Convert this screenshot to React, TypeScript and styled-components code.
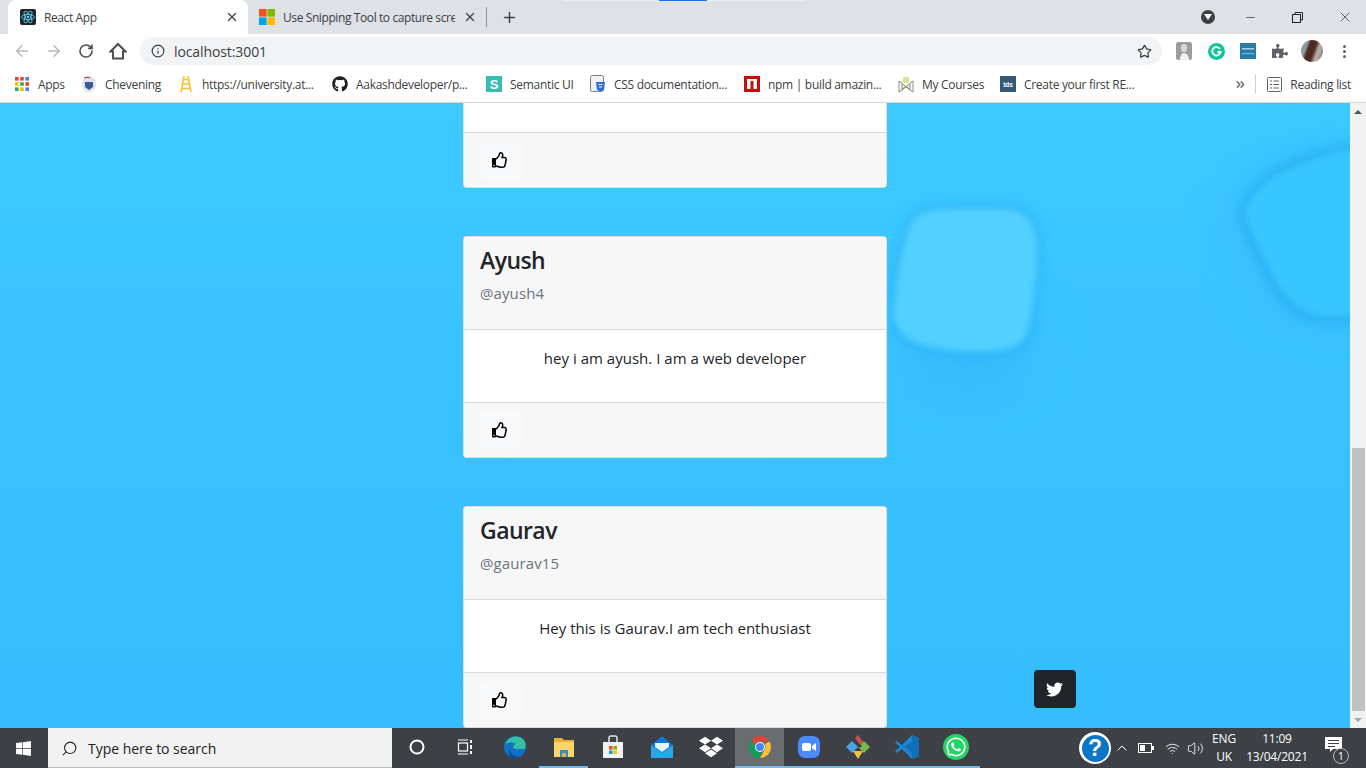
import React from "react";
import styled, { createGlobalStyle } from "styled-components";
import { FaGithub, FaRegThumbsUp, FaTwitter, FaWhatsapp, FaDropbox, FaWindows, FaPuzzlePiece } from "react-icons/fa";
import { ArrowLeft, ArrowRight, RotateCw, Info, Star, X, Plus, Minus, Search, ChevronUp, Wifi, Volume2, ChevronsRight } from "lucide-react";

const Global = createGlobalStyle`
  html, body { margin: 0; padding: 0; height: 768px; overflow: hidden; }
  * { box-sizing: border-box; }
  body { font-family: "Open Sans", "Noto Sans", "Liberation Sans", sans-serif; }
`;
const Screen = styled.div`width:1366px;height:768px;display:flex;flex-direction:column;position:relative;overflow:hidden;`;

/* Tab strip */
const TabStrip = styled.div`height:34px;background:#dee1e6;display:flex;align-items:flex-end;padding-left:8px;position:relative;flex-shrink:0;`;
const LoadLine = styled.div<{ $l: number; $w: number; $c: string }>`position:absolute;top:0;left:${p => p.$l}px;width:${p => p.$w}px;height:1px;background:${p => p.$c};`;
const Tab = styled.div<{ $active?: boolean; $w: number; $pl: number }>`
  width:${p => p.$w}px;height:${p => p.$active ? 34 : 32}px;display:flex;align-items:center;padding:${p => p.$active ? 0 : 0}px 9px 0 ${p => p.$pl}px;
  background:${p => p.$active ? "#fff" : "transparent"};border-radius:8px 8px 0 0;font-size:12px;color:#3c4043;gap:8px;
  align-self:flex-end;margin-bottom:${p => p.$active ? 0 : 1}px;
`;
const TabLabel = styled.span`flex:1;white-space:nowrap;overflow:hidden;letter-spacing:-.4px;`;
const TabSep = styled.div`width:1px;height:20px;background:#8e9196;margin:0 0 7px 0;`;
const NewTab = styled.div`width:44px;height:34px;display:flex;align-items:center;justify-content:center;color:#3c4043;`;
const WinControls = styled.div`margin-left:auto;margin-right:-2px;display:flex;align-items:center;height:34px;color:#222;`;
const WinBtn = styled.div`width:47px;height:32px;display:flex;align-items:center;justify-content:center;`;
const DownBadge = styled.div`width:14px;height:14px;border-radius:50%;background:#3c4043;margin-right:12px;display:flex;align-items:center;justify-content:center;`;

/* Toolbar */
const Toolbar = styled.div`height:34px;background:#fff;display:flex;align-items:center;flex-shrink:0;padding-left:6px;`;
const NavBtn = styled.div<{ $dim?: boolean }>`width:32px;height:28px;display:flex;align-items:center;justify-content:center;color:${p => p.$dim ? "#b6b8bb" : "#4b4e52"};`;
const Omnibox = styled.div`width:1022px;height:28px;margin-left:6px;border-radius:14px;background:#f1f3f4;display:flex;align-items:center;padding:0 10px 0 11px;font-size:14px;color:#3c4043;gap:9px;`;
const OmniText = styled.span`flex:1;letter-spacing:-.1px;`;
const ExtArea = styled.div`display:flex;margin-left:6px;`;
const ExtSlot = styled.div`width:32px;height:28px;display:flex;align-items:center;justify-content:center;color:#5f6368;`;
const Avatar = styled.div`width:22px;height:22px;border-radius:50%;background:linear-gradient(110deg,#8e9aa0 0 25%,#4d2a22 35% 55%,#b9b2aa 70%,#77746f 100%);`;
const MenuDots = styled.div`display:flex;flex-direction:column;gap:2px;`;
const MenuDot = styled.span`width:3px;height:3px;border-radius:50%;background:#5f6368;`;

/* Bookmarks */
const Bookmarks = styled.div`height:35px;background:#fff;border-bottom:1px solid #d4d6d9;display:flex;align-items:center;padding:0 0 2px 14px;flex-shrink:0;font-size:12px;color:#3c4043;`;
const Mark = styled.div<{ $w: number }>`width:${p => p.$w}px;display:flex;align-items:center;gap:8px;white-space:nowrap;flex-shrink:0;`;
const MarkLabel = styled.span`letter-spacing:-.3px;`;
const MarkEnd = styled.div`margin-left:auto;display:flex;align-items:center;padding-right:15px;color:#5f6368;`;
const MarkSep = styled.div`width:1px;height:20px;background:#d0d2d5;margin:0 11px 0 8px;`;
const ReadingLabel = styled.span`margin-left:8px;color:#3c4043;letter-spacing:-.3px;`;

/* Page */
const Viewport = styled.div`flex:1;min-height:0;display:flex;`;
const Page = styled.main`
  flex:1;position:relative;overflow:hidden;background:linear-gradient(180deg,#3dcaff 0%,#38c1ff 55%,#35bdff 100%);
  display:flex;flex-direction:column;align-items:center;gap:48px;
`;
const Backdrop = styled.svg`position:absolute;left:0;top:0;`;
const Card = styled.section`position:relative;width:424px;background:#fff;border:1px solid rgba(0,0,0,.125);border-radius:4px;flex-shrink:0;display:flex;flex-direction:column;`;
const ClippedCard = styled(Card)`border-top:none;border-radius:0 0 4px 4px;`;
const CardHeader = styled.header`height:93px;background:#f7f7f7;border-bottom:1px solid #d9d9d9;padding:7px 16px 0;border-radius:3px 3px 0 0;`;
const Name = styled.h5`margin:0;font-size:23px;line-height:32px;font-weight:600;color:#212529;letter-spacing:-.55px;`;
const Handle = styled.h6`margin:5px 0 0;font-size:15px;line-height:24px;font-weight:400;color:#6c757d;letter-spacing:.1px;`;
const CardBody = styled.div<{ $h?: number }>`height:${p => p.$h ?? 72}px;padding-top:16px;text-align:center;font-size:15px;line-height:24px;color:#212529;letter-spacing:.02px;`;
const CardFooter = styled.footer`height:55px;background:#f7f7f7;border-top:1px solid #d9d9d9;padding:9px 16px 0;border-radius:0 0 3px 3px;`;
const LikeBtn = styled.button`width:42px;height:37px;border:none;border-radius:4px;background:#f8f9fa;display:flex;align-items:center;justify-content:center;color:#000;padding:0 2px 1px 0;`;
const TweetBtn = styled.button`position:absolute;left:1034px;top:567px;width:42px;height:38px;border:none;border-radius:4px;background:#212529;color:#fff;display:flex;align-items:center;justify-content:center;padding:0 2px 0 0;`;

const Scrollbar = styled.div`width:16px;background:#f1f1f1;display:flex;flex-direction:column;align-items:center;flex-shrink:0;`;
const Arrow = styled.div<{ $down?: boolean; $c: string }>`
  height:17px;flex-shrink:0;width:100%;display:flex;align-items:center;justify-content:center;
  &::before{content:"";border-left:4px solid transparent;border-right:4px solid transparent;
  ${p => p.$down ? `border-top:4px solid ${p.$c};` : `border-bottom:4px solid ${p.$c};`}}
`;
const ScrollSpace = styled.div`height:328px;flex-shrink:0;`;
const Thumb = styled.div`flex:1;width:13px;background:#c1c1c1;`;

/* Taskbar */
const Taskbar = styled.div`height:40px;background:#3d4045;display:flex;align-items:stretch;flex-shrink:0;color:#fff;`;
const StartBtn = styled.div`width:48px;display:flex;align-items:center;justify-content:center;padding-right:2px;`;
const SearchBox = styled.div`width:344px;background:#f2f2f2;display:flex;align-items:center;padding:1px 0 0 13px;gap:10px;color:#222;font-size:14px;border-bottom:1px solid #bbb;`;
const SearchText = styled.span`letter-spacing:-.03px;`;
const TaskSlot = styled.div<{ $open?: boolean; $active?: boolean; $w?: number }>`
  width:${p => p.$w ?? 49}px;display:flex;align-items:center;justify-content:center;position:relative;
  background:${p => p.$active ? "#6a6d70" : "transparent"};
  border-bottom:2px solid ${p => p.$open ? "#76b9ed" : "transparent"};
`;
const Tray = styled.div`margin-left:auto;display:flex;align-items:center;padding-right:11px;`;
const HelpCircle = styled.div`width:32px;height:32px;border-radius:50%;background:#fff;display:flex;align-items:center;justify-content:center;`;
const HelpInner = styled.div`width:27px;height:27px;border-radius:50%;background:#0a76c4;color:#fff;font:bold 23px "Liberation Sans",sans-serif;display:flex;align-items:center;justify-content:center;`;
const TraySlot = styled.div<{ $w: number }>`width:${p => p.$w}px;display:flex;align-items:center;justify-content:center;`;
const TrayText = styled.div<{ $w: number }>`width:${p => p.$w}px;text-align:center;font-size:12px;line-height:18px;letter-spacing:-.2px;color:#fff;`;
const Notif = styled.div`width:44px;height:40px;position:relative;display:flex;align-items:center;justify-content:center;`;
const NotifCount = styled.div`position:absolute;left:22px;top:20px;width:16px;height:16px;border-radius:50%;background:#3d4045;border:1px solid #bbb;font-size:11px;line-height:14px;text-align:center;color:#fff;`;

const ReactIcon = () => (
  <svg width="16" height="16" viewBox="0 0 16 16"><rect width="16" height="16" rx="2" fill="#20232a" />
    <g fill="none" stroke="#61dafb" strokeWidth=".8"><ellipse cx="8" cy="8" rx="6.5" ry="2.6" /><ellipse cx="8" cy="8" rx="6.5" ry="2.6" transform="rotate(60 8 8)" /><ellipse cx="8" cy="8" rx="6.5" ry="2.6" transform="rotate(120 8 8)" /></g>
    <circle cx="8" cy="8" r="1.3" fill="#61dafb" /></svg>
);
const MsIcon = () => (
  <svg width="16" height="16" viewBox="0 0 16 16"><rect width="7.6" height="7.6" fill="#f25022" /><rect x="8.4" width="7.6" height="7.6" fill="#7fba00" /><rect y="8.4" width="7.6" height="7.6" fill="#00a4ef" /><rect x="8.4" y="8.4" width="7.6" height="7.6" fill="#ffb900" /></svg>
);
const AppsIcon = () => (
  <svg width="16" height="16" viewBox="0 0 16 16">
    {[["#ea4335", "#ea4335", "#4285f4"], ["#fbbc05", "#34a853", "#ea4335"], ["#34a853", "#fbbc05", "#4285f4"]].map((r, y) => r.map((c, x) => <rect key={`${x}${y}`} x={1 + x * 5.2} y={1 + y * 5.2} width="3.6" height="3.6" fill={c} />))}
  </svg>
);
const CheveningIcon = () => (
  <svg width="16" height="18" viewBox="0 0 16 18"><ellipse cx="8" cy="9" rx="7" ry="8" fill="#dfe3ec" /><path d="M4 7h8v5l-4 3-4-3z" fill="#3a5a9c" /><path d="M3 3c2-1 4-1 6 0" stroke="#9a2f3a" fill="none" /></svg>
);
const UniIcon = () => (
  <svg width="16" height="18" viewBox="0 0 16 18" fill="none" stroke="#fbc02d" strokeWidth="1.6"><path d="M6 1L3 17M10 1l3 16M5 4.500h6M4.500 9h7M3.800 13.500h8.400" /></svg>
);
const SemanticIcon = () => (
  <svg width="16" height="16" viewBox="0 0 16 16"><rect width="16" height="16" fill="#35bdb2" /><text x="8" y="13" textAnchor="middle" fontSize="13" fontWeight="700" fill="#fff" fontFamily="Liberation Sans">S</text></svg>
);
const CssIcon = () => (
  <svg width="16" height="18" viewBox="0 0 16 18"><rect x=".5" y=".5" width="13" height="16" rx="2" fill="#eef0f3" stroke="#7b8088" /><path d="M6 7h9l-1 8-3.500 1.500L7 15z" fill="#2f6fd8" /><path d="M8.500 9.500h4M9 12h3" stroke="#fff" /></svg>
);
const NpmIcon = () => (
  <svg width="16" height="16" viewBox="0 0 16 16"><rect width="16" height="16" fill="#cb0a0a" /><rect x="3" y="3" width="10" height="10" fill="#fff" /><rect x="6.500" y="5" width="3" height="8" fill="#cb0a0a" /></svg>
);
const CoursesIcon = () => (
  <svg width="16" height="18" viewBox="0 0 16 18" fill="none" stroke="#8b8b7a"><path d="M1 6l3 2v7l-3 2zM15 6l-3 2v7l3 2zM4 15l4-3 4 3M4 9l8 5M12 9l-8 5" /><rect x="5" y="2" width="6" height="6" fill="#dbe29a" stroke="none" /></svg>
);
const TdsIcon = () => (
  <svg width="16" height="16" viewBox="0 0 16 16"><rect width="16" height="16" fill="#355876" /><text x="8" y="10.500" textAnchor="middle" fontSize="6.500" fontWeight="700" fill="#fff" fontFamily="Liberation Sans">tds</text></svg>
);
const ReadingIcon = () => (
  <svg width="15" height="15" viewBox="0 0 15 15" fill="none" stroke="#5f6368"><rect x=".5" y=".5" width="14" height="14" rx="1" /><path d="M3 4h2M3 7.500h2M3 11h2M6.500 4H12M6.500 7.500H12M6.500 11H12" /></svg>
);
const HomeGlyph = () => (
  <svg width="18" height="18" viewBox="0 0 18 18" fill="none" stroke="#4b4e52" strokeWidth="2"><path d="M1.500 9.500L9 2l7.500 7.500H14v7H4v-7z" strokeLinejoin="miter" /></svg>
);
const GrammarlyIcon = () => (
  <svg width="17" height="17" viewBox="0 0 17 17"><circle cx="8.500" cy="8.500" r="8.500" fill="#15c39a" /><path d="M12 6a4.200 4.200 0 1 0 .6 3H9.500" fill="none" stroke="#fff" strokeWidth="1.900" /></svg>
);
const BoxExt = () => (
  <svg width="16" height="16" viewBox="0 0 16 16"><rect width="16" height="16" fill="#2b7cab" /><rect x="2" y="5" width="12" height="1.500" fill="#a7cfe4" /><rect x="2" y="10" width="12" height="1" fill="#7fb8d6" /></svg>
);
const PersonExt = () => (
  <svg width="16" height="18" viewBox="0 0 16 18"><rect width="16" height="18" rx="2" fill="#9b9d9f" /><ellipse cx="8" cy="6" rx="3" ry="4" fill="#d9dadb" /><path d="M4 18c0-5 2-7 4-7s5 2 5 7z" fill="#eef0f1" /></svg>
);
const EdgeIcon = () => (
  <svg width="24" height="24" viewBox="0 0 24 24"><circle cx="12" cy="12" r="11" fill="#1171c4" /><path d="M2 10C4 2 14-1 20 4c3 3 3 7 2 10h-9c-4 0-3-4 0-5-4-2-9-2-11 1z" fill="#35c1a0" /><path d="M7 14c0 5 5 8 10 7l-5 2C7 23 4 18 7 14z" fill="#0b4f9c" /></svg>
);
const FolderIcon = () => (
  <svg width="24" height="24" viewBox="0 0 24 24"><path d="M2 3h8l2 2h10v4H2z" fill="#e7b23c" /><rect x="2" y="7" width="20" height="15" fill="#fbd568" /><rect x="8" y="15" width="8" height="7" fill="#2a8fd0" /><rect x="10" y="18" width="4" height="4" fill="#e7b23c" /></svg>
);
const StoreIcon = () => (
  <svg width="24" height="24" viewBox="0 0 24 24"><rect x="2" y="7" width="20" height="16" fill="#f2f2f2" /><path d="M8 7V3a2 2 0 0 1 2-2h4a2 2 0 0 1 2 2v4" fill="none" stroke="#e6e6e6" strokeWidth="1.500" /><rect x="8" y="11" width="3.600" height="3.600" fill="#f25022" /><rect x="12.400" y="11" width="3.600" height="3.600" fill="#7fba00" /><rect x="8" y="15.400" width="3.600" height="3.600" fill="#00a4ef" /><rect x="12.400" y="15.400" width="3.600" height="3.600" fill="#ffb900" /></svg>
);
const MailIcon = () => (
  <svg width="24" height="24" viewBox="0 0 24 24"><path d="M12 1l11 9v13H1V10z" fill="#0f78d4" /><path d="M1 10l11 8 11-8v13H1z" fill="#27a6ea" /><path d="M5 8h14v4l-7 5-7-5z" fill="#e8f3fb" /></svg>
);
const ChromeIcon = () => (
  <svg width="24" height="24" viewBox="0 0 24 24"><path d="M12 1a11 11 0 0 1 9.500 5.500H12a5.500 5.500 0 0 0-5 3.200L3.500 5A11 11 0 0 1 12 1z" fill="#db4437" /><path d="M21.500 6.500A11 11 0 0 1 12 23l4.700-8.200A5.500 5.500 0 0 0 16.800 9z" fill="#fbc02d" /><path d="M12 23A11 11 0 0 1 3.500 5L8 12.800a5.500 5.500 0 0 0 5.600 4.400z" fill="#0f9d58" /><circle cx="12" cy="12" r="5" fill="#fff" /><circle cx="12" cy="12" r="4" fill="#4285f4" /></svg>
);
const ZoomIcon = () => (
  <svg width="24" height="24" viewBox="0 0 24 24"><rect x="1" y="1" width="22" height="22" rx="7" fill="#4a8cff" /><rect x="5" y="8" width="9" height="8" rx="2" fill="#fff" /><path d="M15 11l4-3v8l-4-3z" fill="#fff" /></svg>
);
const GitIcon = () => (
  <svg width="26" height="26" viewBox="0 0 26 26"><path d="M7 7l6 6-6 6-6-6z" fill="#4aa3ea" /><path d="M13 1l5 7-3 3-5-7z" fill="#d24b4b" /><path d="M19 7l6 6-6 6-6-6z" fill="#79b84a" /><path d="M8 17h10l-5 8z" fill="#f0c242" /><circle cx="15" cy="12" r="1.500" fill="#333" /></svg>
);
const VsIcon = () => (
  <svg width="26" height="26" viewBox="0 0 26 26"><path d="M18 1l7 3v18l-7 3L8 15l-5 4-2-2 5-4-5-4 2-2 5 4z" fill="#1a86d0" /><path d="M18 1l7 3v18l-7 3zM18 7l-7 6 7 6z" fill="#0f70b7" fillRule="evenodd" /></svg>
);
const BatteryIcon = () => (
  <svg width="16" height="10" viewBox="0 0 16 10"><rect x=".5" y=".5" width="13" height="9" fill="none" stroke="#fff" /><rect x="2" y="2" width="5" height="6" fill="#fff" /><rect x="14" y="3" width="2" height="4" fill="#fff" /></svg>
);
const TaskViewIcon = () => (
  <svg width="17" height="16" viewBox="0 0 17 16" fill="none" stroke="#fff" strokeWidth="1.200"><path d="M1 1h10M1 15h10" /><rect x="1.500" y="4" width="9" height="8" /><path d="M14 1v3M14 6v4M14 12v3" strokeWidth="2" /></svg>
);
const NotifIcon = () => (
  <svg width="17" height="16" viewBox="0 0 17 16" style={{ marginTop: -6 }}><path d="M0 0h17v12H8l-3 3v-3H0z" fill="#fff" /><path d="M3 3.500h11M3 6.500h11M3 9.500h7" stroke="#3d4045" /></svg>
);

const BLOB_A = "M930 108C955 105 990 105 1012 107C1030 110 1038 128 1037 148C1036 180 1033 210 1026 232C1020 246 1000 250 965 248C940 247 915 243 904 232C894 222 892 212 895 200C897 175 902 145 908 127C912 115 920 110 930 108Z";
const BLOB_B = "M1360 44C1335 48 1300 60 1277 71C1258 84 1245 100 1245 111C1250 130 1266 160 1277 181C1288 198 1300 210 1320 213C1335 214 1350 213 1360 212Z";

const BlobBackdrop = () => (
  <Backdrop width="1350" height="625" viewBox="0 0 1350 625" aria-hidden="true">
    <defs>
      <filter id="soft" x="-30%" y="-30%" width="160%" height="160%"><feGaussianBlur stdDeviation="3" /></filter>
      <filter id="halo" x="-40%" y="-40%" width="180%" height="180%"><feGaussianBlur stdDeviation="6" /></filter>
      <filter id="wide" x="-60%" y="-60%" width="220%" height="220%"><feGaussianBlur stdDeviation="30" /></filter>
    </defs>
    <path d={BLOB_B} fill="#2aa8f8" opacity=".55" filter="url(#wide)" />
    <ellipse cx="965" cy="250" rx="70" ry="35" fill="#2fb0fa" opacity=".5" filter="url(#wide)" />
    <path d={BLOB_A} fill="none" stroke="#2bb2f8" strokeWidth="8" filter="url(#halo)" />
    <path d={BLOB_B} fill="none" stroke="#1c9eea" strokeWidth="6" filter="url(#halo)" />
    <path d={BLOB_A} fill="#52d0ff" filter="url(#soft)" />
    <path d={BLOB_B} fill="#38c6ff" filter="url(#soft)" />
  </Backdrop>
);

const Person = ({ name, handle, text }: { name: string; handle: string; text: string }) => (
  <Card>
    <CardHeader><Name>{name}</Name><Handle>{handle}</Handle></CardHeader>
    <CardBody>{text}</CardBody>
    <CardFooter><LikeBtn aria-label="like"><FaRegThumbsUp size={16} /></LikeBtn></CardFooter>
  </Card>
);

export default function App() {
  return (
    <Screen>
      <Global />
      <TabStrip>
        <LoadLine $l={564} $w={95} $c="#eceef0" />
        <LoadLine $l={659} $w={48} $c="#1a73e8" />
        <LoadLine $l={707} $w={97} $c="#eceef0" />
        <Tab $active $w={240} $pl={12}><ReactIcon /><TabLabel>React App</TabLabel><X size={14} strokeWidth={2.2} /></Tab>
        <Tab $w={238} $pl={11}><MsIcon /><TabLabel>Use Snipping Tool to capture scre</TabLabel><X size={14} strokeWidth={2.2} /></Tab>
        <TabSep />
        <NewTab><Plus size={17} strokeWidth={2} /></NewTab>
        <WinControls>
          <DownBadge><svg width="8" height="6" viewBox="0 0 8 6"><path d="M0 0h8L4 6z" fill="#fff" /></svg></DownBadge>
          <WinBtn><Minus size={13} strokeWidth={1.2} /></WinBtn>
          <WinBtn><svg width="11" height="11" viewBox="0 0 11 11" fill="none" stroke="#222"><rect x=".5" y="2.500" width="8" height="8" /><path d="M3 2.500V.5h7.500V8H8.500" /></svg></WinBtn>
          <WinBtn><X size={16} strokeWidth={1} /></WinBtn>
        </WinControls>
      </TabStrip>

      <Toolbar>
        <NavBtn $dim><ArrowLeft size={18} strokeWidth={2} /></NavBtn>
        <NavBtn $dim><ArrowRight size={18} strokeWidth={2} /></NavBtn>
        <NavBtn><RotateCw size={16} strokeWidth={2.4} /></NavBtn>
        <NavBtn><HomeGlyph /></NavBtn>
        <Omnibox>
          <Info size={14} strokeWidth={2} />
          <OmniText>localhost:3001</OmniText>
          <Star size={15} strokeWidth={2} />
        </Omnibox>
        <ExtArea>
          <ExtSlot><PersonExt /></ExtSlot>
          <ExtSlot><GrammarlyIcon /></ExtSlot>
          <ExtSlot><BoxExt /></ExtSlot>
          <ExtSlot><FaPuzzlePiece size={16} /></ExtSlot>
          <ExtSlot><Avatar /></ExtSlot>
          <ExtSlot><MenuDots><MenuDot /><MenuDot /><MenuDot /></MenuDots></ExtSlot>
        </ExtArea>
      </Toolbar>

      <Bookmarks>
        <Mark $w={67}><AppsIcon /><MarkLabel>Apps</MarkLabel></Mark>
        <Mark $w={97}><CheveningIcon /><MarkLabel>Chevening</MarkLabel></Mark>
        <Mark $w={154}><UniIcon /><MarkLabel>https://university.at...</MarkLabel></Mark>
        <Mark $w={154}><FaGithub size={16} color="#1b1f23" /><MarkLabel>Aakashdeveloper/p...</MarkLabel></Mark>
        <Mark $w={104}><SemanticIcon /><MarkLabel>Semantic UI</MarkLabel></Mark>
        <Mark $w={154}><CssIcon /><MarkLabel>CSS documentation...</MarkLabel></Mark>
        <Mark $w={154}><NpmIcon /><MarkLabel>npm | build amazin...</MarkLabel></Mark>
        <Mark $w={102}><CoursesIcon /><MarkLabel>My Courses</MarkLabel></Mark>
        <Mark $w={154}><TdsIcon /><MarkLabel>Create your first RE...</MarkLabel></Mark>
        <MarkEnd>
          <ChevronsRight size={13} strokeWidth={2.4} />
          <MarkSep />
          <ReadingIcon />
          <ReadingLabel>Reading list</ReadingLabel>
        </MarkEnd>
      </Bookmarks>

      <Viewport>
        <Page>
          <BlobBackdrop />
          <ClippedCard>
            <CardBody $h={29} />
            <CardFooter><LikeBtn aria-label="like"><FaRegThumbsUp size={16} /></LikeBtn></CardFooter>
          </ClippedCard>
          <Person name="Ayush" handle="@ayush4" text="hey i am ayush. I am a web developer" />
          <Person name="Gaurav" handle="@gaurav15" text="Hey this is Gaurav.I am tech enthusiast" />
          <TweetBtn aria-label="twitter"><FaTwitter size={17} /></TweetBtn>
        </Page>
        <Scrollbar>
          <Arrow $c="#505050" />
          <ScrollSpace />
          <Thumb />
          <Arrow $down $c="#a3a3a3" />
        </Scrollbar>
      </Viewport>

      <Taskbar>
        <StartBtn><FaWindows size={17} /></StartBtn>
        <SearchBox><Search size={17} strokeWidth={1.5} style={{ transform: "scaleX(-1)" }} /><SearchText>Type here to search</SearchText></SearchBox>
        <TaskSlot><svg width="16" height="16" viewBox="0 0 16 16"><circle cx="8" cy="8" r="6.500" fill="none" stroke="#fff" strokeWidth="2" /></svg></TaskSlot>
        <TaskSlot><TaskViewIcon /></TaskSlot>
        <TaskSlot><EdgeIcon /></TaskSlot>
        <TaskSlot $open><FolderIcon /></TaskSlot>
        <TaskSlot><StoreIcon /></TaskSlot>
        <TaskSlot><MailIcon /></TaskSlot>
        <TaskSlot><FaDropbox size={24} /></TaskSlot>
        <TaskSlot $open $active><ChromeIcon /></TaskSlot>
        <TaskSlot $open><ZoomIcon /></TaskSlot>
        <TaskSlot $open><GitIcon /></TaskSlot>
        <TaskSlot $open><VsIcon /></TaskSlot>
        <TaskSlot $open><FaWhatsapp size={26} color="#fff" style={{ background: "#25d366", borderRadius: "50%", padding: 2 }} /></TaskSlot>
        <Tray>
          <HelpCircle><HelpInner>?</HelpInner></HelpCircle>
          <TraySlot $w={22}><ChevronUp size={16} strokeWidth={1.5} /></TraySlot>
          <TraySlot $w={26}><BatteryIcon /></TraySlot>
          <TraySlot $w={26}><Wifi size={15} strokeWidth={1.4} /></TraySlot>
          <TraySlot $w={20}><Volume2 size={17} strokeWidth={1.2} /></TraySlot>
          <TrayText $w={38}>ENG<br />UK</TrayText>
          <TrayText $w={68}>11:09<br />13/04/2021</TrayText>
          <Notif><NotifIcon /><NotifCount>1</NotifCount></Notif>
        </Tray>
      </Taskbar>
    </Screen>
  );
}
